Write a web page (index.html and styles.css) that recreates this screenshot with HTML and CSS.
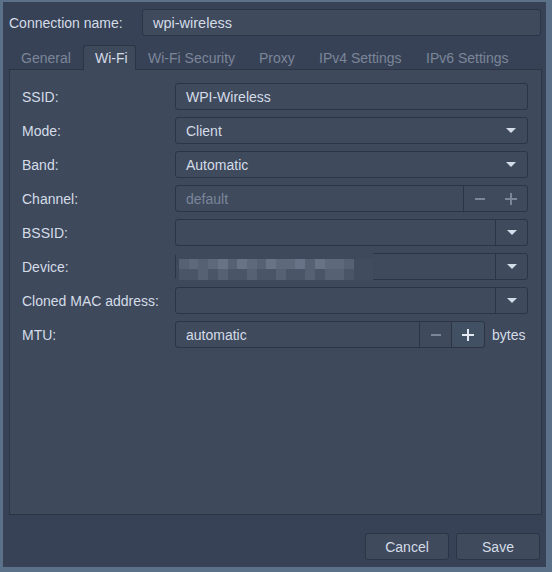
FILE: index.html
```html
<!DOCTYPE html>
<html>
<head>
<meta charset="utf-8">
<link rel="stylesheet" href="styles.css">
</head>
<body>
<div class="window">
  <div class="header">
    <span class="hlabel">Connection name:</span>
    <div class="entry name-entry">wpi-wireless</div>
  </div>
  <div class="tabs">
    <div class="tab t1">General</div>
    <div class="tab t2 active">Wi-Fi</div>
    <div class="tab t3">Wi-Fi Security</div>
    <div class="tab t4">Proxy</div>
    <div class="tab t5">IPv4 Settings</div>
    <div class="tab t6">IPv6 Settings</div>
  </div>
  <div class="page">
    <div class="form">
      <div class="label">SSID:</div>
      <div class="entry field">WPI-Wireless</div>

      <div class="label">Mode:</div>
      <div class="entry field combo"><span>Client</span><span class="arrow"></span></div>

      <div class="label">Band:</div>
      <div class="entry field combo"><span>Automatic</span><span class="arrow"></span></div>

      <div class="label">Channel:</div>
      <div class="entry field spin">
        <span class="spin-text disabled">default</span>
        <span class="spin-btn sep"><span class="minus dim"></span></span>
        <span class="spin-btn"><span class="plus dim"></span></span>
      </div>

      <div class="label">BSSID:</div>
      <div class="entry field combo-entry">
        <span class="ce-text"></span>
        <span class="ce-btn"><span class="arrow"></span></span>
      </div>

      <div class="label">Device:</div>
      <div class="entry field combo-entry device">
        <span class="ce-text"></span>
        <span class="ce-btn"><span class="arrow"></span></span>
        <div class="blur">
          <div class="brow top">
            <i class="c2"></i><i class="c3"></i><i class="c2"></i><i class="c3"></i><i class="c4"></i><i class="c2"></i><i class="c4"></i><i class="c3"></i><i class="c2"></i><i class="c4"></i><i class="c3"></i><i class="c3"></i><i class="c4"></i><i class="c2"></i><i class="c4"></i><i class="c3"></i><i class="c3"></i><i class="c2"></i><i class="c0"></i><i class="c0"></i>
          </div>
          <div class="brow bot">
            <i class="c1"></i><i class="c1"></i><i class="c2"></i><i class="c1"></i><i class="c2"></i><i class="c1"></i><i class="c1"></i><i class="c2"></i><i class="c1"></i><i class="c1"></i><i class="c2"></i><i class="c1"></i><i class="c1"></i><i class="c2"></i><i class="c1"></i><i class="c2"></i><i class="c2"></i><i class="c1"></i><i class="c0"></i><i class="c0"></i>
          </div>
        </div>
      </div>

      <div class="label">Cloned MAC address:</div>
      <div class="entry field combo-entry">
        <span class="ce-text"></span>
        <span class="ce-btn"><span class="arrow"></span></span>
      </div>

      <div class="label">MTU:</div>
      <div class="mtu-row">
        <div class="entry field spin mtu">
          <span class="spin-text">automatic</span>
          <span class="spin-btn sep"><span class="minus dim"></span></span>
          <span class="spin-btn sep plusbtn"><span class="plus"></span></span>
        </div>
        <span class="unit">bytes</span>
      </div>
    </div>
  </div>
  <div class="footer">
    <div class="btn">Cancel</div>
    <div class="btn">Save</div>
  </div>
</div>
</body>
</html>
```

FILE: styles.css
```css
html, body {
  margin: 0;
  padding: 0;
  background: #5b7089;
}
body {
  font-family: "Liberation Sans", Arial, sans-serif;
  font-size: 14px;
  color: #d4dce7;
}
.window {
  width: 543px;
  height: 565px;
  margin: 2px 0 0 3px;
  background: #384256;
  display: flex;
  flex-direction: column;
  box-sizing: border-box;
  padding: 7px 0 0 6px;
}
.header {
  display: flex;
  align-items: center;
  height: 27px;
}
.hlabel {
  width: 133px;
}
.entry {
  box-sizing: border-box;
  background: #3f4a5d;
  border: 1px solid #2c3445;
  border-radius: 3px;
  height: 27px;
  display: flex;
  align-items: center;
  padding: 0 10px;
}
.name-entry {
  width: 399px;
  font-size: 14.5px;
}
.tabs {
  display: flex;
  margin-top: 9px;
  height: 24px;
  position: relative;
  z-index: 1;
}
.tab {
  box-sizing: border-box;
  height: 24px;
  padding: 4px 0 0 11px;
  color: #7b8699;
  border: 1px solid transparent;
  border-bottom: none;
}
.tab.active {
  color: #d4dce7;
  background: #3e495c;
  border-color: #2c3445;
  border-radius: 3px 3px 0 0;
  height: 25px;
}
.t1 { width: 74px; }
.t2 { width: 53px; }
.t3 { width: 111px; }
.t4 { width: 60px; }
.t5 { width: 107px; }
.t6 { width: 109px; }
.page {
  box-sizing: border-box;
  width: 533px;
  height: 446px;
  background: #3e495c;
  border: 1px solid #2c3445;
  padding: 13px 12px 0 12px;
}
.form {
  display: grid;
  grid-template-columns: 153px 353px;
  grid-auto-rows: 27px;
  row-gap: 7px;
}
.label {
  display: flex;
  align-items: center;
  padding-top: 1px;
}
.field {
  width: 353px;
}
.combo {
  justify-content: space-between;
  padding-right: 11px;
}
.arrow {
  width: 0;
  height: 0;
  border-left: 5px solid transparent;
  border-right: 5px solid transparent;
  border-top: 5px solid #d3dce8;
}
.spin {
  padding: 0;
}
.spin-text {
  flex: 1;
  padding-left: 10px;
}
.disabled {
  color: #7b8699;
}
.spin-btn {
  width: 32px;
  height: 100%;
  display: flex;
  align-items: center;
  justify-content: center;
  box-sizing: border-box;
}
.spin-btn.sep {
  border-left: 1px solid #2c3445;
}
.minus {
  width: 10px;
  height: 2px;
  background: #7b8699;
}
.plus {
  width: 12px;
  height: 12px;
  position: relative;
}
.plus::before, .plus::after {
  content: "";
  position: absolute;
  background: #e3e9f1;
}
.plus::before {
  left: 0; top: 5px; width: 12px; height: 2px;
}
.plus::after {
  left: 5px; top: 0; width: 2px; height: 12px;
}
.plus.dim::before, .plus.dim::after {
  background: #7b8699;
}
.combo-entry {
  padding: 0;
}
.ce-text {
  flex: 1;
}
.ce-btn {
  width: 32px;
  height: 100%;
  box-sizing: border-box;
  border-left: 1px solid #2c3445;
  display: flex;
  align-items: center;
  justify-content: center;
}
.device {
  position: relative;
}
.blur {
  position: absolute;
  left: 0;
  top: -1px;
  width: 197px;
  height: 27px;
  background: #3e495c;
  display: flex;
  flex-direction: column;
  justify-content: flex-end;
  padding-left: 3px;
  box-sizing: border-box;
}
.brow {
  display: flex;
  height: 10px;
}
.brow.bot {
  height: 11px;
}
.brow i {
  display: block;
  width: 10px;
  height: 100%;
}
.c0 { background: #414c5f; }
.c1 { background: #4a5568; }
.c2 { background: #566174; }
.c3 { background: #5e697c; }
.c4 { background: #687387; }
.mtu-row {
  display: flex;
  align-items: center;
}
.mtu {
  width: 310px;
}
.plusbtn {
  width: 33px;
  background: #425064;
  border-radius: 0 3px 3px 0;
}
.unit {
  margin-left: 7px;
}
.footer {
  display: flex;
  justify-content: flex-end;
  gap: 7px;
  padding: 18px 6px 0 0;
}
.btn {
  box-sizing: border-box;
  width: 84px;
  height: 27px;
  background: #3f4a5d;
  border: 1px solid #2c3445;
  border-radius: 3px;
  display: flex;
  align-items: center;
  justify-content: center;
}
```
